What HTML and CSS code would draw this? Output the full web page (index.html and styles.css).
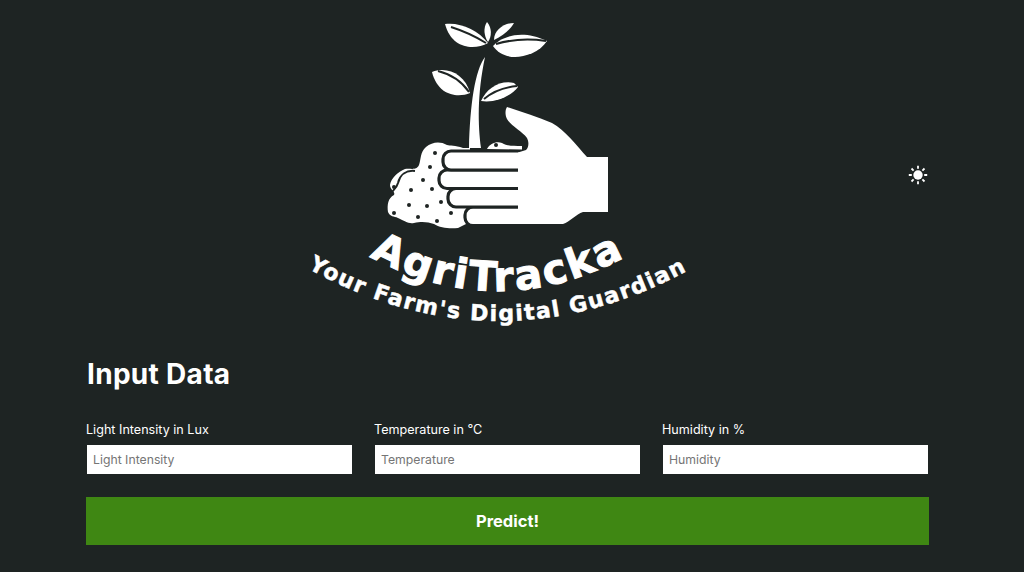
FILE: index.html
```html
<!DOCTYPE html>
<html lang="en">
<head>
<meta charset="utf-8">
<title>AgriTracka</title>
<link rel="stylesheet" href="styles.css">
</head>
<body>
<header class="top">
  <svg class="logo" viewBox="300 0 400 350" width="400" height="350" role="img" aria-label="AgriTracka logo">
    <defs>
      <path id="arc1" d="M360 251 Q497 331 636 251"/>
      <path id="arc2" d="M298 263 Q497 378 698 265"/>
    </defs>
    <g class="white">
      <path d="M445 24C460 22 478 30 488 43C475 50 452 50 445 24Z"/>
      <path d="M487 22C483 28 484 36 488 42C492 36 492 28 487 22Z"/>
      <path d="M514 23C504 23 494 30 494 40C503 36 510 30 514 23Z"/>
      <path d="M493 46C500 38 520 28 547 41C540 52 525 57 515 57C505 57 497 52 493 46Z"/>
      <path d="M432 72C447 66 465 74 470 93C458 98 438 96 432 72Z"/>
      <path d="M481 101C487 88 500 80 514 83L518 87C510 97 495 103 481 101Z"/>
      <path d="M485 57C475 70 470 105 469 148L481 148C478 125 477 95 485 57Z"/>
      <path d="M487 149C490 143 497 141 502 143C507 146 512 146 522 146L522 150Z"/>
      <path d="M463 148C455 145 450 146 447 145C440 141 432 142 426 147C420 152 421 160 419 165C416 171 411 168 405 169C398 172 391 178 390 185C390 190 396 192 394 195C388 198 387 205 388 212C390 217 394 216 398 218C405 221 408 224 414 223C422 221 428 222 434 224C440 228 450 229 458 228L470 222L470 148Z"/>
    </g>
    <g class="slits">
      <path d="M451 27Q470 33 486 43"/>
      <path d="M496 44Q520 37 546 41"/>
      <path d="M438 71Q458 76 469 92"/>
      <path d="M484 99Q497 88 517 86"/>
      <path d="M415 171C406 170 400 175 398 183C396 190 392 190 391 194"/>
    </g>
    <g class="dots">
      <circle cx="435" cy="153" r="2"/><circle cx="430" cy="167" r="2"/><circle cx="423" cy="180" r="2"/>
      <circle cx="411" cy="190" r="2"/><circle cx="432" cy="189" r="2"/><circle cx="394" cy="187" r="2"/>
      <circle cx="409" cy="205" r="2"/><circle cx="427" cy="206" r="2"/><circle cx="441" cy="202" r="2"/>
      <circle cx="394" cy="213" r="2"/><circle cx="418" cy="217" r="2"/><circle cx="437" cy="221" r="2"/>
      <circle cx="451" cy="213" r="2"/><circle cx="496" cy="145" r="2"/>
    </g>
    <g class="fingers">
      <rect x="465" y="207" width="80" height="18.600" rx="8"/>
      <rect x="448" y="188.500" width="90" height="18.500" rx="8"/>
      <rect x="439" y="170" width="99" height="18.500" rx="8"/>
      <rect x="443" y="151" width="95" height="19" rx="8"/>
    </g>
    <path class="white" d="M507 107C505 110 505 115 507 119C511 126 522 131 527 138C529 142 529 147 526 150L518 152.600L518 224L563 224C570 222 576 214 583 212L608 212L608 157L587 157C577 146 565 130 552 123C538 117 522 112 507 107Z"/>
    <text class="name"><textPath href="#arc1" startOffset="50%" text-anchor="middle">AgriTracka</textPath></text>
    <text class="tag"><textPath href="#arc2" startOffset="50%" text-anchor="middle">Your Farm's Digital Guardian</textPath></text>
  </svg>
  <button class="theme" type="button" aria-label="Toggle theme">
    <svg viewBox="0 0 20 20" width="20" height="20">
      <circle cx="10" cy="10" r="4.700" class="sun"/>
      <g class="rays">
        <path d="M10 .8v3M10 16.200v3M.8 10h3M16.200 10h3M3.500 3.500l2.100 2.100M14.400 14.400l2.100 2.100M3.500 16.500l2.100-2.100M14.400 5.600l2.100-2.100"/>
      </g>
    </svg>
  </button>
</header>
<main class="panel">
  <h1 class="title">Input Data</h1>
  <form class="form">
    <div class="fields">
      <label class="field"><span class="label">Light Intensity in Lux</span><input class="input" type="text" placeholder="Light Intensity"></label>
      <label class="field"><span class="label">Temperature in °C</span><input class="input" type="text" placeholder="Temperature"></label>
      <label class="field"><span class="label">Humidity in %</span><input class="input" type="text" placeholder="Humidity"></label>
    </div>
    <button class="submit" type="button">Predict!</button>
  </form>
</main>
</body>
</html>
```
FILE: styles.css
```css
* { box-sizing: border-box; }
html, body { margin: 0; height: 100%; }
body {
  background: #1e2423;
  color: #fff;
  font-family: "Inter", "Liberation Sans", sans-serif;
  overflow: hidden;
}
.top {
  height: 350px;
  padding: 0 96px 0 300px;
  display: flex;
  justify-content: space-between;
  align-items: center;
}
.logo { display: block; }
.white { fill: #fff; }
.slits path { fill: none; stroke: #1e2423; stroke-width: 2; }
.dots { fill: #1e2423; }
.fingers rect { fill: #fff; stroke: #1e2423; stroke-width: 3.200; }
.name {
  fill: #fff;
  stroke: #fff;
  stroke-width: 1px;
  font-family: "DejaVu Sans", sans-serif;
  font-weight: 700;
  font-size: 41px;
  letter-spacing: 2.300px;
}
.tag {
  fill: #fff;
  stroke: #fff;
  stroke-width: .5px;
  font-family: "DejaVu Sans", sans-serif;
  font-weight: 700;
  font-size: 22px;
  letter-spacing: 1.500px;
}
.theme { padding: 0; border: 0; background: none; display: block; width: 20px; height: 20px; }
.theme svg { display: block; }
.sun { fill: #fff; }
.rays path { fill: none; stroke: #fff; stroke-width: 1.800; }
.panel { padding: 0 95px 0 86px; }
.title {
  margin: 6px 0 0 1px;
  font-size: 28px;
  line-height: 36px;
  font-weight: 700;
  letter-spacing: .3px;
}
.form { margin-top: 30px; }
.fields { display: flex; gap: 23px; padding-left: 1px; }
.field { display: flex; flex-direction: column; width: 265px; }
.label { margin-left: -1px; font-size: 12.600px; line-height: 16px; margin-bottom: 7px; }
.input {
  height: 29px;
  border: 0;
  padding: 0 6px;
  background: #fff;
  font-family: "Inter", sans-serif;
  font-size: 12.250px;
  border-radius: 0;
  outline: none;
}
.input::placeholder { color: #757575; }
.submit {
  display: block;
  width: 843px;
  height: 48px;
  margin-top: 23px;
  border: 0;
  background: #3f8713;
  color: #fff;
  font-family: "Inter", sans-serif;
  font-size: 16.500px;
  font-weight: 700;
}
```
